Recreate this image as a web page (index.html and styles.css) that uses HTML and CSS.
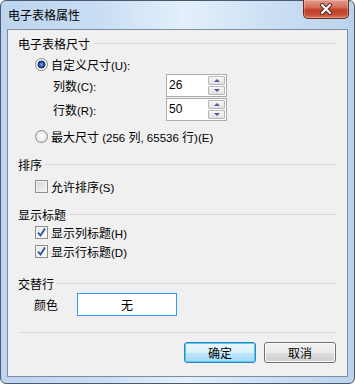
FILE: index.html
```html
<!DOCTYPE html>
<html lang="zh">
<head>
<meta charset="utf-8">
<title>电子表格属性</title>
<link rel="stylesheet" href="styles.css">
</head>
<body>
<div class="window">
  <div class="titlebar">
    <span class="title">电子表格属性</span>
    <div class="close">
      <svg width="16" height="12" viewBox="0 0 16 12"><path d="M4 2 L12 10 M12 2 L4 10" stroke="#4a2a24" stroke-width="4" stroke-linecap="round"/><path d="M4 2 L12 10 M12 2 L4 10" stroke="#ffffff" stroke-width="2.2" stroke-linecap="round"/></svg>
    </div>
  </div>
  <div class="panel">
    <div class="head h1"><span>电子表格尺寸</span><span class="rule"></span></div>
    <div class="opt r1"><span class="radio checked"></span><span>自定义尺寸<span class="lat">(U):</span></span></div>
    <div class="field f1"><span class="flabel">列数<span class="lat">(C):</span></span>
      <div class="spin"><span class="val">26</span><div class="btns"><span class="sb"><i class="up"></i></span><span class="sb"><i class="down"></i></span></div></div>
    </div>
    <div class="field f2"><span class="flabel">行数<span class="lat">(R):</span></span>
      <div class="spin"><span class="val">50</span><div class="btns"><span class="sb"><i class="up"></i></span><span class="sb"><i class="down"></i></span></div></div>
    </div>
    <div class="opt r2"><span class="radio"></span><span>最大尺寸<span class="lat"> (256 </span>列<span class="lat">, 65536 </span>行<span class="lat">)(E)</span></span></div>

    <div class="head h2"><span>排序</span><span class="rule"></span></div>
    <div class="opt c1"><span class="check"></span><span>允许排序<span class="lat">(S)</span></span></div>

    <div class="head h3"><span>显示标题</span><span class="rule"></span></div>
    <div class="opt c2"><span class="check on"><svg width="11" height="11" viewBox="0 0 11 11"><path d="M2 5.5 L4.5 8.5 L9 1.5" fill="none" stroke="#2d4f96" stroke-width="1.8"/></svg></span><span>显示列标题<span class="lat">(H)</span></span></div>
    <div class="opt c3"><span class="check on"><svg width="11" height="11" viewBox="0 0 11 11"><path d="M2 5.5 L4.5 8.5 L9 1.5" fill="none" stroke="#2d4f96" stroke-width="1.8"/></svg></span><span>显示行标题<span class="lat">(D)</span></span></div>

    <div class="head h4"><span>交替行</span><span class="rule"></span></div>
    <div class="colorrow"><span class="clabel">颜色</span><span class="cbox">无</span></div>

    <div class="sep"></div>
    <div class="buttons">
      <span class="btn default">确定</span>
      <span class="btn">取消</span>
    </div>
  </div>
</div>
</body>
</html>
```

FILE: styles.css
```css
html, body {
  margin: 0;
  padding: 0;
  background: #ffffff;
  overflow: hidden;
}
body {
  font-family: "Noto Sans CJK SC", "Liberation Sans", sans-serif;
  font-size: 12px;
  color: #000;
}
.lat {
  font-family: "Liberation Sans", sans-serif;
  font-size: 11.5px;
}
.window {
  width: 355px;
  height: 384px;
  box-sizing: border-box;
  border: 1px solid #4a5a6e;
  border-radius: 6px;
  background: linear-gradient(90deg, #bcd4ee 0%, #cadff4 30%, #e4f0fb 52%, #cfe2f5 72%, #bad3ed 100%);
  display: flex;
  flex-direction: column;
}
.titlebar {
  height: 28px;
  display: flex;
  align-items: flex-start;
  padding-left: 7px;
}
.title {
  margin-top: 7px;
  line-height: 14px;
}
.close {
  margin-left: auto;
  margin-right: 5px;
  margin-top: -1px;
  width: 46px;
  height: 19px;
  box-sizing: border-box;
  border: 1px solid #6e2a1e;
  border-top: none;
  border-radius: 0 0 5px 5px;
  background: linear-gradient(#e39a88 0%, #d4705a 40%, #c0402a 55%, #c84b32 80%, #d97a5e 100%);
  display: flex;
  align-items: center;
  justify-content: center;
  box-shadow: inset 0 0 0 1px rgba(255,255,255,0.25);
}
.panel {
  margin: 0 6px 6px 6px;
  height: 348px;
  box-sizing: border-box;
  border: 1px solid #7d8c9e;
  background: #f0f0f0;
  padding: 4px 11px 0 10px;
  display: flex;
  flex-direction: column;
}
.head {
  height: 18px;
  display: flex;
  align-items: center;
}
.head .rule {
  flex: 1;
  height: 1px;
  background: #d5d5d5;
  margin-left: 3px;
}
.opt {
  display: flex;
  align-items: center;
  margin-left: 17px;
  gap: 3px;
  height: 20px;
}
.r1 { margin-top: 2px; }
.r2 { margin-top: 5px; }
.h2 { margin-top: 9px; }
.c1 { margin-top: 4px; height: 19px; }
.h3 { margin-top: 9px; }
.c2, .c3 { height: 19px; }
.h4 { margin-top: 13px; }
.radio {
  width: 13px;
  height: 13px;
  box-sizing: border-box;
  border-radius: 50%;
  border: 1px solid #8a8a8a;
  background: radial-gradient(circle at 50% 50%, #ffffff 0%, #e6e6e6 70%, #d8d8d8 100%);
}
.radio.checked {
  background: radial-gradient(circle at 50% 50%, #7aa6e6 0%, #1c3f8a 36%, #0d2a66 48%, #e9eef4 54%, #f7f7f7 72%, #d8d8d8 100%);
}
.check {
  width: 13px;
  height: 13px;
  box-sizing: border-box;
  border: 1px solid #8e8f8f;
  background: linear-gradient(135deg, #d6d6d6, #f6f6f6);
  box-shadow: inset 0 0 0 1px #f4f4f4;
  display: flex;
  align-items: center;
  justify-content: center;
}
.check.on {
  background: linear-gradient(135deg, #e6e6e6, #ffffff);
}
.field {
  display: flex;
  align-items: center;
  height: 23px;
  margin-left: 35px;
}
.f2 { margin-top: 1px; }
.flabel {
  width: 113px;
}
.spin {
  width: 61px;
  height: 23px;
  box-sizing: border-box;
  border: 1px solid #a9abb0;
  background: #ffffff;
  display: flex;
}
.val {
  flex: 1;
  padding-left: 2px;
  line-height: 20px;
  font-family: "Liberation Sans", sans-serif;
}
.btns {
  width: 18px;
  display: flex;
  flex-direction: column;
  gap: 1px;
  padding: 1px 1px 1px 0;
  box-sizing: border-box;
}
.sb {
  flex: 1;
  box-sizing: border-box;
  border: 1px solid #b7b7b7;
  border-radius: 1px;
  background: linear-gradient(#f7f7f7, #e2e2e2);
  display: flex;
  align-items: center;
  justify-content: center;
}
.sb i {
  width: 0;
  height: 0;
  border-left: 3px solid transparent;
  border-right: 3px solid transparent;
}
.sb i.up { border-bottom: 3px solid #4b5f8c; }
.sb i.down { border-top: 3px solid #4b5f8c; }
.colorrow {
  display: flex;
  align-items: center;
  margin-top: 1px;
  height: 23px;
  margin-left: 16px;
}
.clabel {
  width: 43px;
}
.cbox {
  width: 100px;
  height: 23px;
  box-sizing: border-box;
  border: 1px solid #3399ff;
  background: #ffffff;
  display: flex;
  align-items: center;
  justify-content: center;
}
.sep {
  height: 1px;
  background: #d5d5d5;
  margin-top: 16px;
  margin-left: 1px;
}
.buttons {
  margin-top: 9px;
  display: flex;
  justify-content: flex-end;
  gap: 8px;
}
.btn {
  width: 72px;
  height: 21px;
  box-sizing: border-box;
  border: 1px solid #707070;
  border-radius: 3px;
  background: linear-gradient(#f2f2f2 0%, #ebebeb 50%, #dddddd 51%, #cfcfcf 100%);
  box-shadow: inset 0 0 0 1px #fcfcfc;
  display: flex;
  align-items: center;
  justify-content: center;
}
.btn.default {
  border-color: #3c7fb1;
  background: linear-gradient(#eaf6fd 0%, #d9f0fc 50%, #bee6fd 51%, #a7d9f5 100%);
  box-shadow: inset 0 0 0 1px #48d0ff;
}
```
